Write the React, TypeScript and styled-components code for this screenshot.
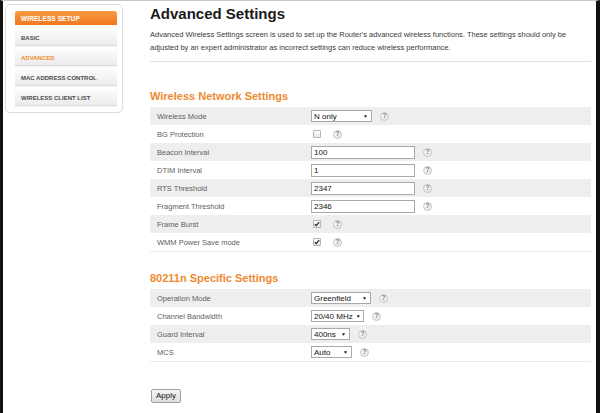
import React from 'react';
import styled, { createGlobalStyle } from 'styled-components';

const GlobalStyle = createGlobalStyle`
  html, body {
    margin: 0;
    padding: 0;
    background: #ffffff;
  }
  body {
    box-sizing: border-box;
    height: 413px;
    overflow: hidden;
    border-top: 1px solid #c9c9c9;
    border-left: 3px solid #111111;
    border-right: 4px solid #111111;
    font-family: 'Liberation Sans', Arial, sans-serif;
    color: #333333;
  }
`;

const Page = styled.div`
  display: flex;
  align-items: flex-start;
  padding-left: 2px;
`;

const Sidebar = styled.nav`
  margin-top: 3px;
  width: 118px;
  box-sizing: border-box;
  padding: 6px 5px 6px 9px;
  border: 1px solid #dedede;
  border-radius: 5px;
  display: flex;
  flex-direction: column;
  gap: 4px;
  box-shadow: 0 0 2px rgba(0, 0, 0, 0.05);
`;

const SideHeader = styled.div`
  height: 14px;
  margin-bottom: 1px;
  display: flex;
  align-items: center;
  padding-left: 6px;
  border-radius: 3px 3px 0 0;
  background: linear-gradient(#f89a45, #f0781e);
  color: #ffffff;
  font-size: 6.5px;
  font-weight: bold;
  letter-spacing: 0.1px;
`;

const SideItem = styled.div<{ $active?: boolean }>`
  height: 15px;
  display: flex;
  align-items: center;
  padding-left: 6px;
  background: linear-gradient(#fbfbfb, #ececec);
  border-bottom: 1px solid #dcdcdc;
  box-shadow: 0 1px 1px rgba(0, 0, 0, 0.04);
  color: ${(p) => (p.$active ? '#ef8a2e' : '#4a4a4a')};
  font-size: 6px;
  font-weight: 600;
`;

const Main = styled.main`
  margin-left: 27px;
  width: 441px;
  padding-top: 3.5px;
`;

const Title = styled.h1`
  margin: 0;
  font-size: 15px;
  line-height: 18px;
  font-weight: bold;
  color: #1a1a1a;
`;

const Description = styled.p`
  margin: 5px 0 0;
  font-size: 7.5px;
  line-height: 13px;
  color: #3a3a3a;
`;

const Rule = styled.div`
  margin-top: 7.5px;
  height: 1px;
  background: #e0e0e0;
`;

const SectionTitle = styled.h2<{ $top: number }>`
  margin: ${(p) => p.$top}px 0 4px;
  font-size: 11px;
  line-height: 14px;
  font-weight: bold;
  color: #ef8a2e;
`;

const Table = styled.div`
  border-bottom: 1px solid #ebebeb;
`;

const Row = styled.div<{ $shade: boolean }>`
  height: 18px;
  display: flex;
  align-items: center;
  background: ${(p) => (p.$shade ? '#eeeeee' : '#ffffff')};
`;

const Label = styled.div`
  width: 161px;
  box-sizing: border-box;
  padding-left: 7px;
  font-size: 7.5px;
  color: #5e5e5e;
`;

const Field = styled.div`
  display: flex;
  align-items: center;
  gap: 8px;
`;

const SelectBox = styled.div<{ $w: number }>`
  width: ${(p) => p.$w}px;
  height: 12px;
  box-sizing: border-box;
  border: 1px solid #a9a9a9;
  background: #ffffff;
  display: flex;
  align-items: center;
  justify-content: space-between;
  padding: 0 3px 0 2px;
  font-size: 8px;
  color: #111111;
  white-space: nowrap;
`;

const Caret = styled.span`
  font-size: 5px;
  color: #222222;
  margin-left: 3px;
`;

const TextBox = styled.div`
  width: 104px;
  height: 13px;
  box-sizing: border-box;
  border: 1px solid #a9a9a9;
  background: #ffffff;
  display: flex;
  align-items: center;
  padding-left: 2px;
  font-size: 8px;
  color: #111111;
`;

const CheckBox = styled.span`
  margin-left: 2px;
  width: 8px;
  height: 8px;
  box-sizing: border-box;
  border: 1px solid #b5b5b5;
  border-radius: 1px;
  background: linear-gradient(#ffffff, #e6e6e6);
  display: flex;
  align-items: center;
  justify-content: center;
  margin-right: 4px;
`;

const Help = styled.span`
  width: 9px;
  height: 9px;
  box-sizing: border-box;
  border-radius: 50%;
  border: 1px solid #c8c8c8;
  background: radial-gradient(circle at 40% 35%, #ffffff, #dcdcdc);
  color: #777777;
  font-size: 6.5px;
  font-weight: bold;
  display: flex;
  align-items: center;
  justify-content: center;
  line-height: 1;
`;

const ApplyButton = styled.button`
  margin-top: 27px;
  margin-left: 1px;
  height: 14px;
  padding: 0 4px;
  border: 1px solid #a0a0a0;
  border-radius: 2px;
  background: linear-gradient(#f6f6f6, #dddddd);
  font-family: 'Liberation Sans', Arial, sans-serif;
  font-size: 8px;
  color: #111111;
  line-height: 1;
`;

const Tick = () => (
  <svg width="6" height="6" viewBox="0 0 6 6">
    <path d="M0.8 3.1 L2.3 4.7 L5.2 1.2" fill="none" stroke="#222" strokeWidth="1.2" />
  </svg>
);

type Control =
  | { kind: 'select'; value: string; width: number }
  | { kind: 'text'; value: string }
  | { kind: 'check'; checked: boolean };

type Setting = { label: string; control: Control };

const wireless: Setting[] = [
  { label: 'Wireless Mode', control: { kind: 'select', value: 'N only', width: 61 } },
  { label: 'BG Protection', control: { kind: 'check', checked: false } },
  { label: 'Beacon Interval', control: { kind: 'text', value: '100' } },
  { label: 'DTIM Interval', control: { kind: 'text', value: '1' } },
  { label: 'RTS Threshold', control: { kind: 'text', value: '2347' } },
  { label: 'Fragment Threshold', control: { kind: 'text', value: '2346' } },
  { label: 'Frame Burst', control: { kind: 'check', checked: true } },
  { label: 'WMM Power Save mode', control: { kind: 'check', checked: true } },
];

const specific: Setting[] = [
  { label: 'Operation Mode', control: { kind: 'select', value: 'Greenfield', width: 60 } },
  { label: 'Channel Bandwidth', control: { kind: 'select', value: '20/40 MHz', width: 53 } },
  { label: 'Guard Interval', control: { kind: 'select', value: '400ns', width: 39 } },
  { label: 'MCS', control: { kind: 'select', value: 'Auto', width: 41 } },
];

const renderControl = (c: Control) => {
  switch (c.kind) {
    case 'select':
      return (
        <SelectBox $w={c.width}>
          {c.value}
          <Caret>▼</Caret>
        </SelectBox>
      );
    case 'text':
      return <TextBox>{c.value}</TextBox>;
    case 'check':
      return <CheckBox>{c.checked && <Tick />}</CheckBox>;
  }
};

const SettingsTable: React.FC<{ rows: Setting[] }> = ({ rows }) => (
  <Table>
    {rows.map((r, i) => (
      <Row key={r.label} $shade={i % 2 === 0}>
        <Label>{r.label}</Label>
        <Field>
          {renderControl(r.control)}
          <Help>?</Help>
        </Field>
      </Row>
    ))}
  </Table>
);

const App: React.FC = () => (
  <>
    <GlobalStyle />
    <Page>
      <Sidebar>
        <SideHeader>WIRELESS SETUP</SideHeader>
        <SideItem>BASIC</SideItem>
        <SideItem $active>ADVANCED</SideItem>
        <SideItem>MAC ADDRESS CONTROL</SideItem>
        <SideItem>WIRELESS CLIENT LIST</SideItem>
      </Sidebar>
      <Main>
        <Title>Advanced Settings</Title>
        <Description>
          Advanced Wireless Settings screen is used to set up the Router's advanced wireless functions. These settings
          should only be adjusted by an expert administrator as incorrect settings can reduce wireless performance.
        </Description>
        <Rule />
        <SectionTitle $top={27}>Wireless Network Settings</SectionTitle>
        <SettingsTable rows={wireless} />
        <SectionTitle $top={19}>80211n Specific Settings</SectionTitle>
        <SettingsTable rows={specific} />
        <ApplyButton>Apply</ApplyButton>
      </Main>
    </Page>
  </>
);

export default App;
